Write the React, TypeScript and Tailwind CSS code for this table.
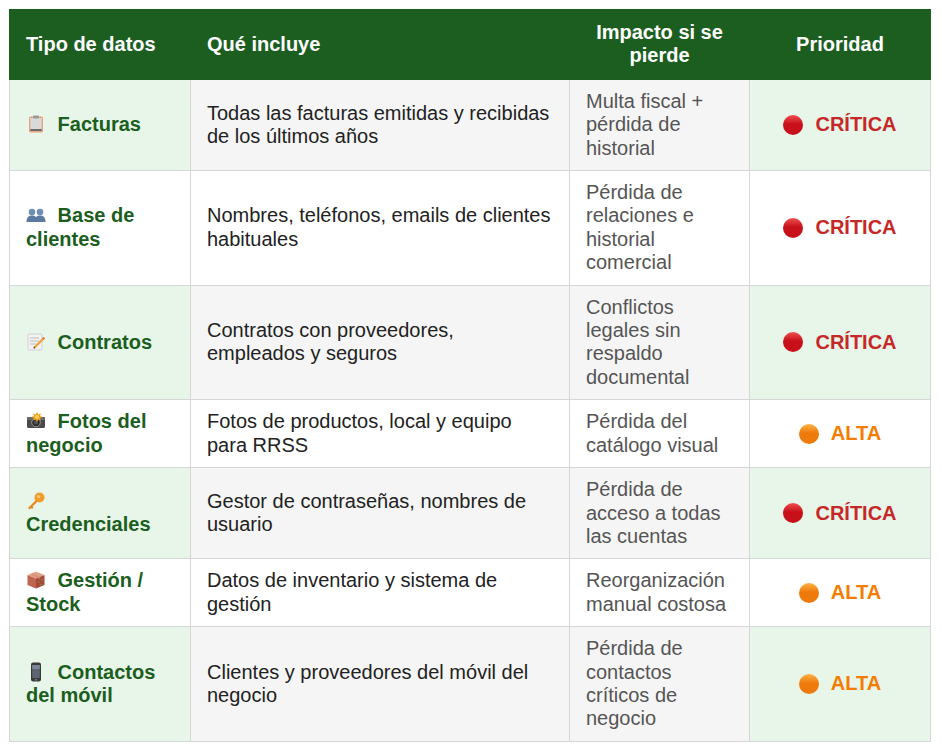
import React from "react";

type Level = "crit" | "alta";

type Row = {
  icon: React.ReactNode;
  name: string;
  includes: string;
  impact: string;
  level: Level;
};

function Clipboard() {
  return (
    <svg viewBox="0 0 20 20" width="20" height="20">
      <rect x="3" y="2.5" width="14" height="16" rx="1.5" fill="#e9a27e" />
      <rect x="4.3" y="4" width="11.4" height="13" fill="#d9d9d9" />
      <rect x="4.3" y="15" width="11.4" height="2" fill="#6b6b6b" />
      <rect x="7" y="1.5" width="6" height="3" rx="0.8" fill="#9a9a9a" />
    </svg>
  );
}

function People() {
  return (
    <svg viewBox="0 0 20 20" width="20" height="20">
      <circle cx="6" cy="7" r="3.3" fill="#6f8eb0" />
      <path d="M0.5 17 C0.5 12 3 10.5 6 10.5 C9 10.5 11.5 12 11.5 17 Z" fill="#5a7aa0" />
      <circle cx="14" cy="7" r="3.3" fill="#6f8eb0" />
      <path d="M8.5 17 C8.5 12 11 10.5 14 10.5 C17 10.5 19.5 12 19.5 17 Z" fill="#5a7aa0" />
    </svg>
  );
}

function Memo() {
  return (
    <svg viewBox="0 0 20 20" width="20" height="20">
      <rect x="2" y="2" width="14" height="16" rx="1" fill="#f2f2f2" stroke="#c9c9c9" strokeWidth="0.8" />
      <line x1="4" y1="6" x2="13" y2="6" stroke="#b5b5b5" strokeWidth="0.9" />
      <line x1="4" y1="9" x2="13" y2="9" stroke="#b5b5b5" strokeWidth="0.9" />
      <line x1="4" y1="12" x2="10" y2="12" stroke="#b5b5b5" strokeWidth="0.9" />
      <path d="M17.5 5 L19 6.5 L9.5 16 L7.5 16.5 L8 14.5 Z" fill="#f0a030" />
      <path d="M17.5 5 L19 6.5 L18 7.5 L16.5 6 Z" fill="#e06060" />
      <path d="M8 14.5 L9.5 16 L7.5 16.5 Z" fill="#553300" />
    </svg>
  );
}

function Camera() {
  return (
    <svg viewBox="0 0 20 20" width="20" height="20">
      <rect x="1" y="6" width="18" height="11" rx="1.5" fill="#4a4a4a" />
      <rect x="1" y="6" width="18" height="3" fill="#6a6a6a" />
      <circle cx="10" cy="11.5" r="4.3" fill="#2b2b2b" stroke="#9a9a9a" strokeWidth="1" />
      <circle cx="10" cy="11.5" r="2" fill="#555" />
      <path d="M11 1 L12.3 3.6 L15 2.5 L14 5 L16.8 6 L14 7 L15 9.5 L12.3 8.4 L11 11 L9.7 8.4 L7 9.5 L8 7 L5.2 6 L8 5 L7 2.5 L9.7 3.6 Z" fill="#f7a21b" />
      <circle cx="11" cy="6" r="2" fill="#ffd060" />
    </svg>
  );
}

function KeyIcon() {
  return (
    <svg viewBox="0 0 20 20" width="20" height="20">
      <circle cx="13.5" cy="6.5" r="5" fill="#f29b2b" />
      <circle cx="12.5" cy="5.5" r="1.8" fill="#ffc870" />
      <path d="M10 9 L2 17 L3.5 18.5 L5 17 L6 18 L7.5 16.5 L6.5 15.5 L11.5 10.5 Z" fill="#e8861c" />
    </svg>
  );
}

function Box() {
  return (
    <svg viewBox="0 0 20 20" width="20" height="20">
      <path d="M10 1.5 L18.5 5 L10 8.5 L1.5 5 Z" fill="#e0a08a" />
      <path d="M1.5 5 L10 8.5 L10 18.5 L1.5 15 Z" fill="#c4604e" />
      <path d="M18.5 5 L10 8.5 L10 18.5 L18.5 15 Z" fill="#a84a3a" />
      <path d="M5.5 3.3 L14 6.8 L14 9 L5.5 5.5 Z" fill="#d88a70" opacity="0.7" />
      <circle cx="4" cy="10" r="0.7" fill="#6aa050" />
      <circle cx="7" cy="12" r="0.7" fill="#6aa050" />
      <circle cx="13" cy="12" r="0.7" fill="#6aa050" />
      <circle cx="16" cy="10" r="0.7" fill="#6aa050" />
      <circle cx="5" cy="14" r="0.7" fill="#6aa050" />
      <circle cx="15" cy="14.5" r="0.7" fill="#6aa050" />
    </svg>
  );
}

function Phone() {
  return (
    <svg viewBox="0 0 20 20" width="20" height="20">
      <rect x="5" y="0.5" width="10" height="19" rx="2" fill="#3a3a3a" />
      <rect x="6.2" y="3" width="7.6" height="13" fill="#5d6470" />
      <rect x="6.2" y="3" width="7.6" height="4" fill="#7b8594" />
      <circle cx="10" cy="17.7" r="0.9" fill="#888" />
    </svg>
  );
}

function Dot({ level }: { level: Level }) {
  const id = level === "crit" ? "gr" : "go";
  const c1 = level === "crit" ? "#f05050" : "#ffb347";
  const c2 = level === "crit" ? "#c8101a" : "#ee7a0c";
  return (
    <svg viewBox="0 0 20 20" width="20" height="20" className="shrink-0">
      <defs>
        <linearGradient id={id} x1="0" y1="0" x2="0" y2="1">
          <stop offset="0" stopColor={c1} />
          <stop offset="0.45" stopColor={c2} />
          <stop offset="1" stopColor={c2} />
        </linearGradient>
      </defs>
      <circle cx="10" cy="10" r="10" fill={`url(#${id})`} />
    </svg>
  );
}

const rows: Row[] = [
  {
    icon: <Clipboard />,
    name: "Facturas",
    includes: "Todas las facturas emitidas y recibidas de los últimos años",
    impact: "Multa fiscal + pérdida de historial",
    level: "crit",
  },
  {
    icon: <People />,
    name: "Base de clientes",
    includes: "Nombres, teléfonos, emails de clientes habituales",
    impact: "Pérdida de relaciones e historial comercial",
    level: "crit",
  },
  {
    icon: <Memo />,
    name: "Contratos",
    includes: "Contratos con proveedores, empleados y seguros",
    impact: "Conflictos legales sin respaldo documental",
    level: "crit",
  },
  {
    icon: <Camera />,
    name: "Fotos del negocio",
    includes: "Fotos de productos, local y equipo para RRSS",
    impact: "Pérdida del catálogo visual",
    level: "alta",
  },
  {
    icon: <KeyIcon />,
    name: "Credenciales",
    includes: "Gestor de contraseñas, nombres de usuario",
    impact: "Pérdida de acceso a todas las cuentas",
    level: "crit",
  },
  {
    icon: <Box />,
    name: "Gestión / Stock",
    includes: "Datos de inventario y sistema de gestión",
    impact: "Reorganización manual costosa",
    level: "alta",
  },
  {
    icon: <Phone />,
    name: "Contactos del móvil",
    includes: "Clientes y proveedores del móvil del negocio",
    impact: "Pérdida de contactos críticos de negocio",
    level: "alta",
  },
];

export default function App() {
  return (
    <div className="bg-white min-h-screen p-[9px] font-['Liberation_Sans',Arial,sans-serif] text-[20px] leading-[23.4px]">
      <table className="w-[921px] table-fixed border-collapse">
        <colgroup>
          <col className="w-[181px]" />
          <col className="w-[379px]" />
          <col className="w-[180px]" />
          <col className="w-[181px]" />
        </colgroup>
        <thead>
          <tr className="bg-[#1b5e20] text-white font-bold">
            <th className="border border-[#1b5e20] px-4 py-[11px] text-left align-middle">Tipo de datos</th>
            <th className="border border-[#1b5e20] px-4 py-[11px] text-left align-middle">Qué incluye</th>
            <th className="border border-[#1b5e20] px-4 py-[11px] text-center align-middle">Impacto si se pierde</th>
            <th className="border border-[#1b5e20] px-4 py-[11px] text-center align-middle">Prioridad</th>
          </tr>
        </thead>
        <tbody>
          {rows.map((r, i) => {
            const shaded = i % 2 === 0;
            return (
              <tr key={r.name}>
                <td
                  className={`border border-[#d6d6d6] px-4 py-[10px] align-middle font-bold text-[#1b5e20] ${
                    shaded ? "bg-[#e8f5e9]" : "bg-white"
                  }`}
                >
                  <span className="inline-block w-[20px] h-[20px] mr-[6px] align-[-3px]">{r.icon}</span>{" "}
                  {r.name}
                </td>
                <td
                  className={`border border-[#d6d6d6] px-4 py-[10px] align-middle text-[#222] ${
                    shaded ? "bg-[#f5f5f5]" : "bg-white"
                  }`}
                >
                  {r.includes}
                </td>
                <td
                  className={`border border-[#d6d6d6] px-4 py-[10px] align-middle text-[#555] ${
                    shaded ? "bg-[#f5f5f5]" : "bg-white"
                  }`}
                >
                  {r.impact}
                </td>
                <td
                  className={`border border-[#d6d6d6] px-4 py-[10px] align-middle ${
                    shaded ? "bg-[#e8f5e9]" : "bg-white"
                  }`}
                >
                  <div className="flex items-center justify-center gap-[12px] font-bold">
                    <Dot level={r.level} />
                    <span className={r.level === "crit" ? "text-[#c62828]" : "text-[#f57c00]"}>
                      {r.level === "crit" ? "CRÍTICA" : "ALTA"}
                    </span>
                  </div>
                </td>
              </tr>
            );
          })}
        </tbody>
      </table>
    </div>
  );
}
